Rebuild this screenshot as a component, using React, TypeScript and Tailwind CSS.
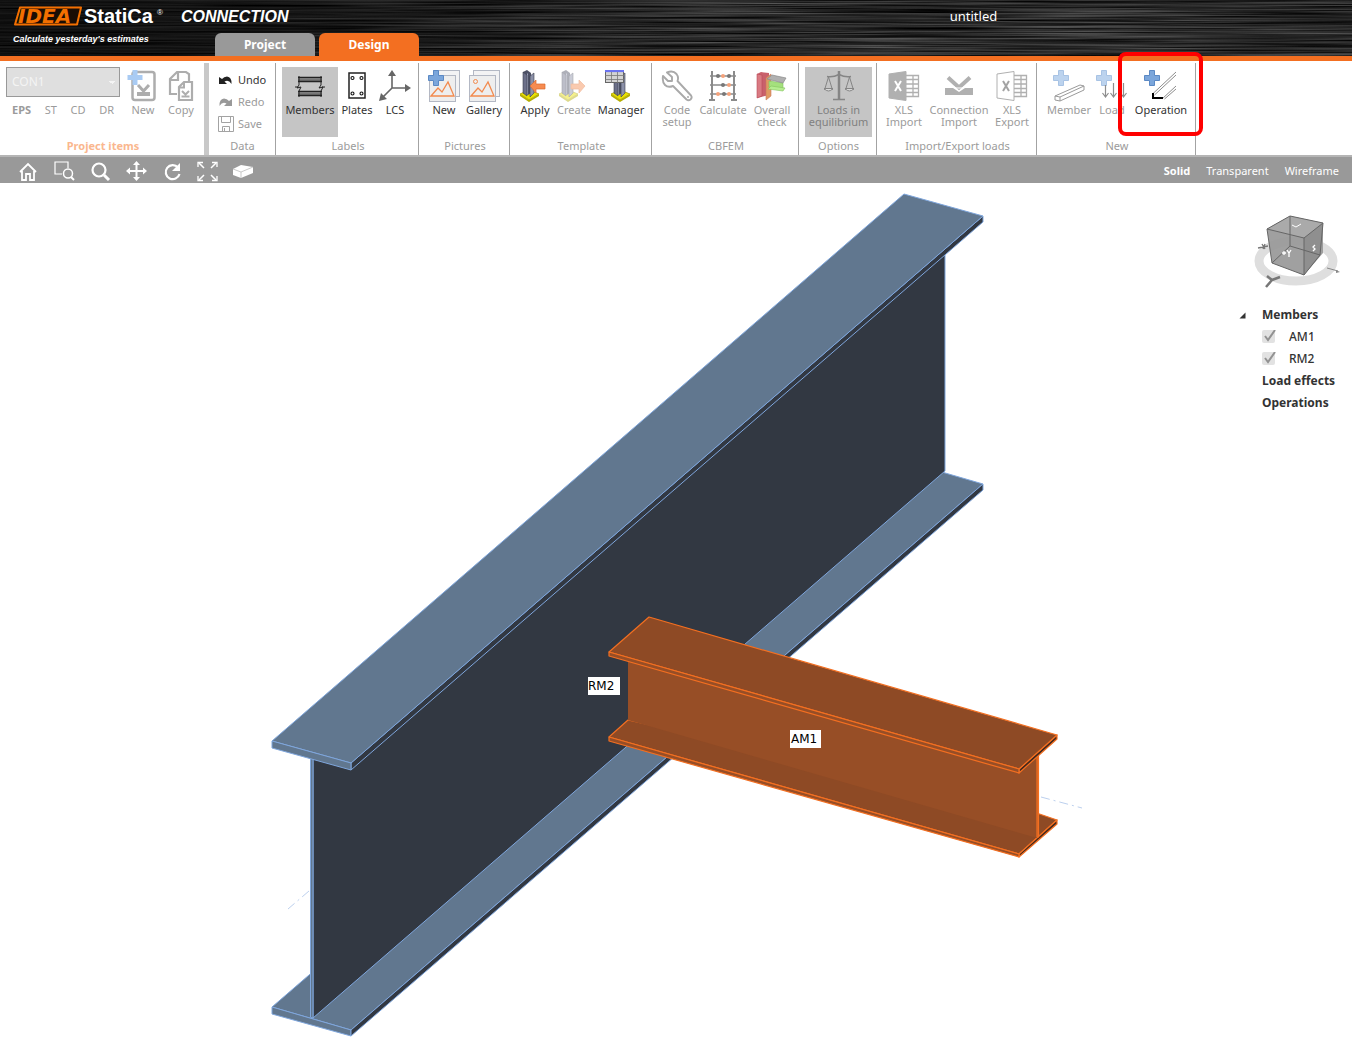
import type { ReactNode } from 'react'

const PlusMark = ({ fill = '#7ba6db', stroke = '#5b89c4' }: { fill?: string; stroke?: string }) => (
    <path d="M5.5 .5h5v5h5v5h-5v5h-5v-5h-5v-5h5z" fill={fill} stroke={stroke} />
)

const Icon = ({ w = 32, children }: { w?: number; children: ReactNode }) => (
    <svg width={w} height="32" viewBox={`0 0 ${w} 32`} fill="none" className="block shrink-0" aria-hidden="true">{children}</svg>
)

const NewItemIcon = () => (
    <Icon>
        <rect x="5.5" y="2" width="22" height="28" rx="2.5" stroke="#adadad" strokeWidth="2.5" />
        <path d="M10 22h13v4H10z" fill="#adadad" />
        <path d="M11 15l5.5 6L22 15" stroke="#adadad" strokeWidth="3" />
        <path d="M5.5 0h5v5h5v5h-5v5h-5v-5h-5v-5h5z" fill="#a9cbf3" />
    </Icon>
)

const CopyIcon = () => (
    <Icon>
        <path d="M12 24H5V9l7-7h9l3 2v8M13 2v8H5" stroke="#adadad" strokeWidth="2.2" />
        <path d="M19 12h8v18H14V17z" fill="#fff" stroke="#adadad" strokeWidth="2.2" />
        <path d="M19 12v5.500H14" stroke="#adadad" strokeWidth="2" />
        <path d="M16.5 26.500h8M17 21l3.500 3.500l3.500-3.500" stroke="#adadad" strokeWidth="2" />
    </Icon>
)

const MembersIcon = () => (
    <Icon>
        <path d="M4 10h24M4 24h24" stroke="#777" strokeWidth="3" />
        <path d="M4 7.5h24M4 11.5h24M4 21.5h24M4 25.5h24" stroke="#222" strokeWidth="1.500" />
        <path d="M5 6v9l-2 3l4-1l-2 4v6M27 6v9l-2 3l4-1l-2 4v6M1 17h3M28 17h3" stroke="#222" />
    </Icon>
)

const PlatesIcon = () => (
    <Icon w={20}>
        <rect x="2" y="3" width="16" height="25" stroke="#222" strokeWidth="1.500" />
        <g stroke="#111" strokeWidth="1.100">
            <circle cx="5.500" cy="8" r="1.500" /><circle cx="14.500" cy="8" r="1.500" />
            <circle cx="5.500" cy="23.500" r="1.500" /><circle cx="14.500" cy="23.500" r="1.500" />
        </g>
    </Icon>
)

const LcsIcon = () => (
    <Icon>
        <path d="M13 4v14h14M13 18L3 28" stroke="#666" strokeWidth="1.600" />
        <path d="M13 0l4 6H9zM32 18l-6-4v8zM0 31l2-8l6 6z" fill="#666" />
    </Icon>
)

const PictureIcon = ({ plus = false }: { plus?: boolean }) => (
    <Icon>
        <rect x="5.500" y=".5" width="26" height="26" fill="#f3f3f4" stroke="#b3b8c4" />
        <rect x="1.500" y="5.500" width="26" height="26" fill="#eee" stroke="#b3b8c4" />
        <path d="M3 26l7-8l4 4l6-10l6 14z" stroke="#f28a4e" strokeWidth="1.300" />
        {plus ? <PlusMark /> : <circle cx="7.500" cy="11.500" r="2" stroke="#f28a4e" />}
    </Icon>
)

// column on a yellow base plate, shared by the template icons
const Column = () => (
    <>
        <path d="M6 24l9-4l10 4l-10 6z" fill="#e9e000" stroke="#a8a000" strokeWidth=".8" />
        <path d="M6 24l9 6l10-6v2l-10 6l-9-6z" fill="#b5ad00" />
        <path d="M9 2l4-2l4 3v20l-3 2l-5-2z" fill="#4e5266" />
        <path d="M13 4l1-1v21l-1 1z" fill="#9ba0b8" />
        <path d="M9 2l4 3v21l-4-3z" fill="#6c7089" stroke="#3a3d4c" strokeWidth=".6" />
        <path d="M16 6l4-3v20l-4 4z" fill="#8b90a8" stroke="#3a3d4c" strokeWidth=".6" />
    </>
)

const ApplyIcon = () => (
    <Icon>
        <g transform="translate(-5 0)"><Column /></g>
        <path d="M11 16l6-6v4h9v5h-9v4z" fill="#f68b50" stroke="#db6a2c" strokeWidth=".7" />
    </Icon>
)

const CreateIcon = () => (
    <Icon>
        <g opacity=".45">
            <g transform="translate(-5 0)"><Column /></g>
            <path d="M27 16l-6-6v4h-8v5h8v4z" fill="#f68b50" stroke="#db6a2c" strokeWidth=".7" />
        </g>
    </Icon>
)

const ManagerIcon = () => (
    <Icon>
        <Column />
        <rect x=".5" y=".5" width="18" height="12" fill="#d3d3d3" stroke="#666" />
        <path d="M0 1h19" stroke="#6b73f0" strokeWidth="2.200" />
        <path d="M0 5.500h19M0 9.500h19M6.500 2v11M12.500 2v11" stroke="#777" strokeWidth=".8" />
    </Icon>
)

const WrenchIcon = () => (
    <Icon>
        <path d="M2 6l5 5h4v-4L6 2.500Q12 0 15.500 4q2.500 3 1 7L30 25.500q1.500 2-.5 4q-2 1.500-4 0L12 16Q7 18 4 15T2 6z" stroke="#a9a9a9" strokeWidth="1.900" strokeLinejoin="round" />
        <circle cx="27" cy="27" r="1" fill="#a9a9a9" />
    </Icon>
)

const AbacusIcon = () => (
    <Icon>
        <path d="M5 1v29M27 1v29M2 30h6M24 30h6" stroke="#8b8b8b" strokeWidth="2" />
        <path d="M3 6h26M3 15h26M3 24h26" stroke="#8b8b8b" strokeWidth="1.400" />
        <g fill="#777">
            <circle cx="11" cy="6" r="2" /><circle cx="22" cy="6" r="2" /><circle cx="16" cy="15" r="2" /><circle cx="17" cy="24" r="2" />
        </g>
        <g fill="#f5a27b">
            <circle cx="16" cy="6" r="2" /><circle cx="22" cy="15" r="2" /><circle cx="11" cy="24" r="2" /><circle cx="22" cy="24" r="2" />
        </g>
    </Icon>
)

const OverallIcon = () => (
    <Icon>
        <path d="M1 4l4-2l8 1v22l-4 1l-8 2z" fill="#c9606b" />
        <path d="M1 4l5 1v21l-5 2z" fill="#d97a82" stroke="#b94a58" strokeWidth=".6" />
        <path d="M10 8l5-4v22l-5 4z" fill="#e09a63" stroke="#c9785e" strokeWidth=".6" />
        <path d="M13 11l14 2v6l-14-2z" fill="#a5e07d" stroke="#82c45c" strokeWidth=".6" />
        <path d="M12 19l3-3l14 2l-2 3z" fill="#b6ec90" stroke="#82c45c" strokeWidth=".6" />
        <path d="M11 9l5-4l14 3l-3 5z" fill="#b0b0b0" stroke="#8a8a8a" strokeWidth=".7" />
    </Icon>
)

const BalanceIcon = () => (
    <Icon>
        <path d="M16 1v28" stroke="#858585" strokeWidth="2.500" />
        <path d="M10 29.500h12M4 6.500q6 1 12-2q6 3 12 2" stroke="#858585" strokeWidth="1.600" />
        <path d="M5.500 7L1.500 20M5.500 7l4 13M26.500 7l-4 13M26.500 7l4 13" stroke="#858585" />
        <path d="M1 18.500h9q-4.500 5 -9 0zM22 18.500h9q-4.500 5-9 0z" fill="#d8d8d8" stroke="#858585" />
    </Icon>
)

const XlsIcon = ({ outline = false }: { outline?: boolean }) => (
    <Icon>
        <path d="M18 5.500h12.500v21H18M18 9.500h12M18 14h12M18 18.500h12M18 22.500h12M25 5v21" stroke="#b0b0b0" strokeWidth="1.300" />
        <path d="M1 4L18 1.500v29L1 28z" fill={outline ? '#fff' : '#b0b0b0'} stroke="#b0b0b0" />
        <path d="M7 11l6 10M13 11l-6 10" stroke={outline ? '#a3a3a3' : '#fff'} strokeWidth="2" />
    </Icon>
)

const ConnectionIcon = () => (
    <Icon>
        <path d="M2 18h8l6 4l6-4h8v7H2z" fill="#b0b0b0" />
        <path d="M5 7.500l11 10l11-10" stroke="#b0b0b0" strokeWidth="4" />
        <path d="M12 8h8l-4 6z" fill="#fff" />
        <path d="M9 15.500l4 2.500h6l4-2.500" stroke="#fff" />
    </Icon>
)

const MemberIcon = () => (
    <Icon>
        <PlusMark fill="#bcd3ee" stroke="#a8c3e4" />
        <path d="M2 26l5 1v4l-5-1zM2 26l25-11l4 1v4L7 31M7 27l24-11" stroke="#9a9a9a" />
    </Icon>
)

const LoadIcon = () => (
    <Icon>
        <PlusMark fill="#bcd3ee" stroke="#a8c3e4" />
        <path d="M9.500 15v11M17.500 13v13M27.500 13v13M6.500 23l3 4l3-4M14.500 23l3 4l3-4M24.500 23l3 4l3-4" stroke="#8d8d8d" strokeWidth="1.200" />
    </Icon>
)

const OperationIcon = () => (
    <Icon w={34}>
        <PlusMark />
        <path d="M8.500 24L32 2M10.500 25L32 5M18 29L32 16M20.500 29L32 19" stroke="#808080" strokeWidth=".9" />
        <path d="M9 23v5h10" stroke="#000" strokeWidth="2" />
    </Icon>
)

type ItemProps = { icon: ReactNode; label: string; className: string; muted?: boolean; active?: boolean; children?: ReactNode }

const Item = ({ icon, label, className, muted, active, children }: ItemProps) => {
    const tone = muted ? (active ? 'text-[#808080]' : 'text-[#9b9b9b]') : 'text-[#333]'
    return (
        <button
            type="button"
            className={`relative flex h-[70px] shrink-0 flex-col items-center pt-[3px] text-[11px] leading-3 ${active ? 'bg-[#c5c5c5]' : ''} ${tone} ${className}`}
        >
            {icon}
            <span className="mt-[2px] whitespace-pre">{label}</span>
            {children}
        </button>
    )
}

const Group = ({ title, className, children }: { title: string; className: string; children: ReactNode }) => (
    <section className={`flex h-[92px] shrink-0 flex-col justify-between border-r border-[#a3a3a3] pt-1 ${className}`}>
        <div className="flex pl-[6px]">{children}</div>
        <h2 className="pb-px pl-[2px] text-center text-[11px] leading-[18px] text-[#9b9b9b]">{title}</h2>
    </section>
)

const Header = () => (
    <header className="relative flex h-[61px] items-stretch overflow-hidden border-b-[5px] border-[#f36f21] bg-[#242424]">
        <svg className="absolute inset-0 h-full w-full" aria-hidden="true">
            <defs>
                <filter id="brushed" x="0" y="0" width="100%" height="100%" colorInterpolationFilters="sRGB">
                    <feTurbulence type="fractalNoise" baseFrequency="0.005 0.6" numOctaves="3" seed="8" />
                    <feColorMatrix values=".5 0 0 0 -.09  .5 0 0 0 -.09  .5 0 0 0 -.09  0 0 0 0 1" />
                </filter>
                <linearGradient id="shade">
                    <stop offset="0" stopColor="#000" stopOpacity=".6" />
                    <stop offset=".2" stopColor="#000" stopOpacity=".5" />
                    <stop offset=".5" stopColor="#000" stopOpacity="0" />
                </linearGradient>
            </defs>
            <rect width="100%" height="100%" filter="url(#brushed)" />
            <rect width="100%" height="100%" fill="url(#shade)" />
        </svg>
        <div className="relative w-[215px] shrink-0">
            <svg width="300" height="50" viewBox="0 0 300 50" className="block font-['Liberation_Sans',sans-serif]">
                <path d="M20 7.500h61l-4 17H15z" fill="#1a0d04" stroke="#f36f00" strokeWidth="2" strokeLinejoin="round" />
                <text x="18" y="23" fontSize="20" fontWeight="700" fontStyle="italic" fill="#f36f00" fontFamily="DejaVu Sans">IDEA</text>
                <text x="84" y="23" fontSize="20" fontWeight="700" fill="#fff">StatiCa</text>
                <text x="157" y="15" fontSize="8" fill="#fff">®</text>
                <text x="181" y="22" fontSize="16" fontWeight="700" fontStyle="italic" fill="#fff">CONNECTION</text>
                <text x="13" y="42" fontSize="9" fontWeight="700" fontStyle="italic" fill="#fff">Calculate yesterday's estimates</text>
            </svg>
        </div>
        <nav className="relative flex shrink-0 items-end gap-1 text-xs font-bold text-white">
            <a href="#project" className="flex h-[23px] w-[100px] items-center justify-center rounded-t-md bg-[#999]">Project</a>
            <a href="#design" className="flex h-[23px] w-[100px] items-center justify-center rounded-t-md bg-[#f36f21]">Design</a>
        </nav>
        <h1 className="relative flex-1 pt-2 pl-44 text-center text-[13px] leading-4 text-white">untitled</h1>
    </header>
)

const Ribbon = () => (
    <div className="flex h-24 items-start border-b-2 border-[#b5b5b5] bg-white pt-[2px]">
        <section className="flex h-[92px] w-[209px] shrink-0 flex-col justify-between border-r-[5px] border-[#c8c8c8] pt-1 pl-[6px] text-[#9b9b9b]">
            <div className="flex">
                <div className="w-[114px]">
                    <select aria-label="Project item" disabled className="h-[30px] w-full appearance-none border border-[#999] bg-[#dfdfdf] bg-[linear-gradient(45deg,transparent_50%,#f4f4f4_50%),linear-gradient(-45deg,transparent_50%,#f4f4f4_50%)] bg-[length:3px_3px] bg-[position:102px_13px,105px_13px] bg-no-repeat px-[5px] text-xs text-[#f4f4f4] opacity-100">
                        <option>CON1</option>
                    </select>
                    <div className="flex justify-between px-[6px] pt-[7px] text-[11px] leading-3">
                        <button type="button" className="font-bold">EPS</button>
                        <button type="button">ST</button>
                        <button type="button">CD</button>
                        <button type="button">DR</button>
                    </div>
                </div>
                <Item icon={<NewItemIcon />} label="New" className="ml-1 w-[38px]" muted />
                <Item icon={<CopyIcon />} label="Copy" className="w-[38px]" muted />
            </div>
            <h2 className="pr-[4px] pb-px text-center text-[11px] leading-[18px] font-bold text-[#fab78e]">Project items</h2>
        </section>

        <section className="flex h-[92px] w-[67px] shrink-0 flex-col justify-between border-r border-[#a3a3a3] pt-[6px] pl-[9px] text-[11px] text-[#9b9b9b]">
            <div>
                <button type="button" className="flex h-[22px] items-center gap-[5px] text-[#333]">
                    <svg width="15" height="14" viewBox="0 0 15 14" aria-hidden="true"><path d="M1 4v7h8L6.500 8.500q4-2.500 7 2.500Q14 4 9 3.500Q6 3.500 4 6z" fill="#222" /></svg>
                    Undo
                </button>
                <button type="button" className="flex h-[22px] items-center gap-[5px]">
                    <svg width="15" height="14" viewBox="0 0 15 14" aria-hidden="true"><path d="M14 4v7H6l2.500-2.500q-4-2.500-7 2.500Q1 4 6 3.500q3 0 5 2.500z" fill="#999" /></svg>
                    Redo
                </button>
                <button type="button" className="flex h-[22px] items-center gap-1">
                    <svg width="16" height="16" viewBox="0 0 16 16" fill="none" stroke="#a3a3a3" aria-hidden="true"><path d="M.5 .5h15v15H.5zM3.500 .5v6h9v-6M4.500 15.500v-5h7v5M6.500 12v3" /></svg>
                    Save
                </button>
            </div>
            <h2 className="pr-2 text-center leading-[18px]">Data</h2>
        </section>

        <Group title="Labels" className="w-[143px]">
            <Item icon={<MembersIcon />} label="Members" className="w-14" active />
            <Item icon={<PlatesIcon />} label="Plates" className="w-[38px]" />
            <Item icon={<LcsIcon />} label="LCS" className="w-[38px]" />
        </Group>
        <Group title="Pictures" className="w-[91px]">
            <Item icon={<PictureIcon plus />} label="New" className="w-[38px]" />
            <Item icon={<PictureIcon />} label="Gallery" className="w-[42px]" />
        </Group>
        <Group title="Template" className="w-[142px]">
            <Item icon={<ApplyIcon />} label="Apply" className="w-[38px]" />
            <Item icon={<CreateIcon />} label="Create" className="w-10" muted />
            <Item icon={<ManagerIcon />} label="Manager" className="w-[54px]" />
        </Group>
        <Group title="CBFEM" className="w-[147px]">
            <Item icon={<WrenchIcon />} label={'Code\nsetup'} className="w-[38px]" muted />
            <Item icon={<AbacusIcon />} label="Calculate" className="w-[54px]" muted />
            <Item icon={<OverallIcon />} label={'Overall\ncheck'} className="w-11" muted />
        </Group>
        <Group title="Options" className="w-[78px]">
            <Item icon={<BalanceIcon />} label={'Loads in\nequilibrium'} className="w-[67px]" muted active />
        </Group>
        <Group title="Import/Export loads" className="w-40">
            <Item icon={<XlsIcon />} label={'XLS\nImport'} className="w-[42px]" muted />
            <Item icon={<ConnectionIcon />} label={'Connection\nImport'} className="w-[68px]" muted />
            <Item icon={<XlsIcon outline />} label={'XLS\nExport'} className="w-[38px]" muted />
        </Group>
        <Group title="New" className="w-[159px]">
            <Item icon={<MemberIcon />} label="Member" className="w-[52px]" muted />
            <Item icon={<LoadIcon />} label="Load" className="w-[34px]" muted />
            <Item icon={<OperationIcon />} label="Operation" className="w-[64px]">
                <span className="absolute -top-[15px] -left-[11px] z-10 h-[84px] w-[85px] rounded-lg border-4 border-[#f00]"></span>
            </Item>
        </Group>
    </div>
)

const viewTools = [
    { name: 'Home', art: <path d="M2 11L10 3l8 8M4 10v9h4v-6h4v6h4v-9" strokeWidth="1.800" /> },
    { name: 'Zoom window', art: <><path d="M8 13H1V1h13v6" strokeWidth="1.200" /><path d="M17 16l3 3" strokeWidth="2" /><circle cx="14" cy="12.500" r="4.500" strokeWidth="1.500" /></> },
    { name: 'Zoom', art: <><circle cx="9" cy="9" r="6.500" strokeWidth="2.200" /><path d="M14 14l5 5" strokeWidth="3" /></> },
    { name: 'Pan', art: <><path d="M10.500 2v16M2 10h17" strokeWidth="2" /><path d="M10.500 0l3.500 4H7zM10.500 20l3.500-4H7zM0 10l4-3.500v7zM21 10l-4-3.500v7z" fill="#fff" stroke="none" /></> },
    { name: 'Rotate', art: <><path d="M16 6.500A7 7 0 1 0 17.500 13" strokeWidth="2.200" /><path d="M18 2v8h-8z" fill="#fff" stroke="none" /></> },
    { name: 'Fit', art: <><path d="M1 2l5 5M18 2l-5 5M1 19l5-5M18 19l-5-5" strokeWidth="1.500" /><path d="M0 6V1.500h5M14 1.500h5V6M0 15v4.500h5M19 15v4.500h-5" strokeWidth="1.300" /></> },
    { name: 'Perspective', art: <><path d="M-1 8l8-4l12 2v6L7 17l-8-3z" fill="#fff" stroke="none" /><path d="M-1 8l8 3l12-5M7 11v6" stroke="#bbb" strokeWidth=".8" /></> },
]

const ViewBar = () => (
    <div className="flex h-[26px] items-center justify-between bg-[#999] pt-[2px] pr-[13px] pl-[17px] text-[11px] text-white">
        <div className="flex gap-[14px]">
            {viewTools.map((tool) => (
                <button key={tool.name} type="button" aria-label={tool.name} className="w-[22px] pt-px">
                    <svg width="22" height="22" viewBox="-1 0 22 22" fill="none" stroke="#fff" className="block">{tool.art}</svg>
                </button>
            ))}
        </div>
        <div className="flex gap-4">
            <button type="button" className="font-bold">Solid</button>
            <button type="button">Transparent</button>
            <button type="button">Wireframe</button>
        </div>
    </div>
)

const Scene = () => (
    <svg viewBox="0 183 1230 860" className="block h-auto min-w-0 flex-1" role="img" aria-label="Connection model">
        <g stroke="#7fa6dc" strokeLinejoin="round">
            {/* RM2: bottom flange */}
            <path d="M272 1007L904 461L983 484L351 1030z" fill="#61778f" />
            <path d="M272 1007L351 1030V1036L272 1014z" fill="#61778f" />
            <path d="M351 1030L983 484V490L351 1036z" fill="#323842" />
            {/* RM2: web */}
            <path d="M313 757L945 226V471L313 1018z" fill="#323842" />
            <path d="M310.500 755h2.500V1018l-2.500-.7z" fill="#61778f" />
            {/* RM2: top flange */}
            <path d="M351 763L983 216V222L351 770z" fill="#323842" />
            <path d="M272 741L904 194L983 216L351 763z" fill="#61778f" />
            <path d="M272 741L351 763V770L272 748z" fill="#61778f" />
        </g>
        <g stroke="#f36f21" strokeWidth="1.200" strokeLinejoin="round">
            {/* AM1: bottom flange, web, top flange */}
            <path d="M609 737L628 720L1038 813.500L1057 820L1019 854z" fill="#8e4a25" />
            <path d="M1019 854L1057 820V824L1019 857z" fill="#43281c" />
            <path d="M609 737L1019 854V857L609 741z" fill="#974e26" />
            <path d="M628 655L1037 745V838L628 720z" fill="#974e26" stroke="none" />
            <path d="M1037 752h1.500v85H1037z" fill="#b3592a" />
            <path d="M1019 769L1057 735V739L1019 773z" fill="#43281c" />
            <path d="M609 652L649 617L1057 735L1019 769z" fill="#8e4a25" />
            <path d="M609 652L1019 769V773L609 656z" fill="#974e26" />
        </g>
        <path d="M1041 797L1082 808M309 891L288 909" stroke="#bcd0ee" strokeDasharray="9 4 2 4" />
        <rect x="588" y="677" width="32" height="18" fill="#fff" />
        <rect x="790" y="730" width="31" height="18" fill="#fff" />
        <g fontFamily="DejaVu Sans" fontSize="12">
            <text x="588" y="690">RM2</text>
            <text x="791" y="743">AM1</text>
        </g>
    </svg>
)

const ViewCube = () => (
    <svg width="92" height="80" viewBox="0 0 92 80" fill="none" aria-hidden="true">
        <ellipse cx="46" cy="51" rx="37" ry="20" stroke="#dedede" strokeWidth="9" />
        <path d="M17 19L40 6L73 13V43L54 65L22 53z" fill="#999" fillOpacity=".93" />
        <path d="M17 19L40 6L73 13L54 28z" fill="#aaa" />
        <path d="M54 28L73 13L70 45L54 65z" fill="#8f8f8f" />
        <path d="M17 19L40 6L73 13L54 28zM17 19l5 34l32 12V28M73 13l-3 32l-16 20M40 6v30L22 53M40 36l30 9" stroke="#666" />
        <path d="M42 15l4 2l5-3" stroke="#fff" />
        <path d="M32 43h4M34 41v4M37 40l2 3l2-3M39 43v4M65 35l-2 2l2 2l-2 2" stroke="#fff" strokeWidth="1.300" />
        <path d="M8 38l10-2M12 34l3 5M15 34l-2 5" stroke="#777" strokeWidth="1.300" />
        <path d="M17 66l5 4l8-3M22 70l-6 7" stroke="#777" strokeWidth="2.500" />
        <path d="M77 58l11 3" stroke="#888" />
        <path d="M90 62l-4-2v3z" fill="#888" />
    </svg>
)

const Check = ({ label }: { label: string }) => (
    <label className="flex h-[22px] items-center gap-3 pl-8 text-xs">
        <span className="relative block h-[14px] w-[15px]">
            <input type="checkbox" defaultChecked className="peer block size-[13px] appearance-none rounded-xs bg-[#e2e2e2]" />
            <svg viewBox="0 0 15 14" fill="none" className="pointer-events-none absolute inset-0 hidden peer-checked:block" aria-hidden="true">
                <path d="M3 6l3 4l7-10" stroke="#929292" strokeWidth="2" />
            </svg>
        </span>
        {label}
    </label>
)

const Tree = () => (
    <aside className="w-[122px] shrink-0 pt-[27px] text-[#333]">
        <div className="pl-5"><ViewCube /></div>
        <div className="pt-[14px] text-xs font-bold">
            <button type="button" className="flex h-[22px] items-center gap-4 pl-[9px]">
                <svg width="7" height="7" viewBox="0 0 7 7" aria-hidden="true"><path d="M6.500 .5v6h-6z" fill="#333" /></svg>
                Members
            </button>
            <div className="font-medium">
                <Check label="AM1" />
                <Check label="RM2" />
            </div>
            <div className="flex h-[22px] items-center pl-8 whitespace-nowrap">Load effects</div>
            <div className="flex h-[22px] items-center pl-8">Operations</div>
        </div>
    </aside>
)

const App = () => {
    return (
        <div className="min-h-dvh bg-white font-['Noto_Sans',sans-serif]">
            <Header />
            <Ribbon />
            <ViewBar />
            <main className="flex items-start">
                <Scene />
                <Tree />
            </main>
        </div>
    )
}

export default App
